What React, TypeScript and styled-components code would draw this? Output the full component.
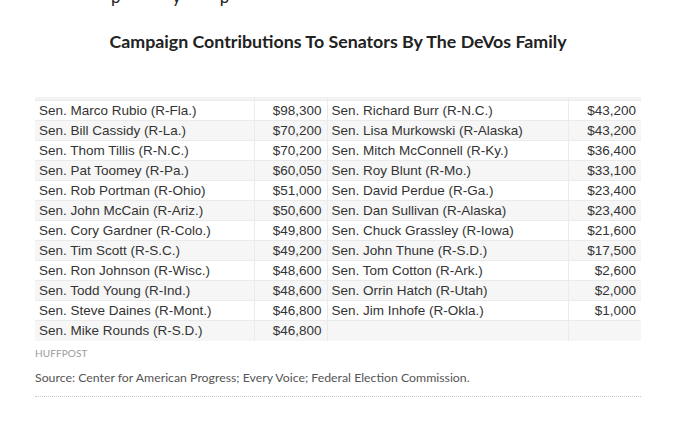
import React from "react";
import styled, { createGlobalStyle } from "styled-components";

const Global = createGlobalStyle`
  html, body { margin: 0; padding: 0; background: #fff; }
  body { width: 680px; height: 425px; overflow: hidden; }
`;

const Page = styled.div`
  display: flex;
  flex-direction: column;
  padding: 0 39px 0 35px;
`;

const Fragment = styled.div`
  height: 6px;
  overflow: hidden;
  font-family: "Lato", "Liberation Sans", sans-serif;
  font-size: 17px;
  color: #222;
  padding-left: 76px;
  white-space: pre;
  & > span { display: block; margin-top: -13px; line-height: 20px; }
`;

const Title = styled.h2`
  margin: 25px 0 0;
  text-align: center;
  font-family: "Lato", "Liberation Sans", sans-serif;
  font-weight: 700;
  font-size: 17.8px;
  line-height: 20px;
  color: #222;
`;

const Table = styled.table`
  margin-top: 46px;
  width: 606px;
  border-collapse: collapse;
  table-layout: fixed;
  font-family: "Liberation Sans", Arial, sans-serif;
  font-size: 13.5px;
  color: #333;
`;

const HeadCell = styled.th`
  height: 3px;
  padding: 0;
  background: #f3f3f3;
  border-left: 1px solid #ececec;
  &:first-child { border-left: none; }
`;

const Row = styled.tr<{ $shade: boolean }>`
  background: ${(p) => (p.$shade ? "#f6f6f6" : "#fff")};
`;

const Cell = styled.td<{ $amount?: boolean }>`
  height: 20px;
  padding: 0 ${(p) => (p.$amount ? "5px" : "4px")} 0 4px;
  line-height: 19px;
  border-top: 1px solid #ebebeb;
  border-left: 1px solid #ebebeb;
  text-align: ${(p) => (p.$amount ? "right" : "left")};
  white-space: nowrap;
  box-sizing: border-box;
  &:first-child { border-left: none; }
`;

const Credit = styled.div`
  margin-top: 6px;
  font-family: "Lato", "Liberation Sans", sans-serif;
  font-size: 10px;
  color: #9a9a9a;
  letter-spacing: 0.1px;
`;

const Source = styled.div`
  margin-top: 11px;
  font-family: "Lato", "Liberation Sans", sans-serif;
  font-size: 12.3px;
  color: #555;
`;

const Rule = styled.div`
  margin-top: 11px;
  width: 606px;
  border-bottom: 1px dotted #c8c8c8;
`;

const left: [string, string][] = [
  ["Sen. Marco Rubio (R-Fla.)", "$98,300"],
  ["Sen. Bill Cassidy (R-La.)", "$70,200"],
  ["Sen. Thom Tillis (R-N.C.)", "$70,200"],
  ["Sen. Pat Toomey (R-Pa.)", "$60,050"],
  ["Sen. Rob Portman (R-Ohio)", "$51,000"],
  ["Sen. John McCain (R-Ariz.)", "$50,600"],
  ["Sen. Cory Gardner (R-Colo.)", "$49,800"],
  ["Sen. Tim Scott (R-S.C.)", "$49,200"],
  ["Sen. Ron Johnson (R-Wisc.)", "$48,600"],
  ["Sen. Todd Young (R-Ind.)", "$48,600"],
  ["Sen. Steve Daines (R-Mont.)", "$46,800"],
  ["Sen. Mike Rounds (R-S.D.)", "$46,800"],
];

const right: [string, string][] = [
  ["Sen. Richard Burr (R-N.C.)", "$43,200"],
  ["Sen. Lisa Murkowski (R-Alaska)", "$43,200"],
  ["Sen. Mitch McConnell (R-Ky.)", "$36,400"],
  ["Sen. Roy Blunt (R-Mo.)", "$33,100"],
  ["Sen. David Perdue (R-Ga.)", "$23,400"],
  ["Sen. Dan Sullivan (R-Alaska)", "$23,400"],
  ["Sen. Chuck Grassley (R-Iowa)", "$21,600"],
  ["Sen. John Thune (R-S.D.)", "$17,500"],
  ["Sen. Tom Cotton (R-Ark.)", "$2,600"],
  ["Sen. Orrin Hatch (R-Utah)", "$2,000"],
  ["Sen. Jim Inhofe (R-Okla.)", "$1,000"],
  ["", ""],
];

export default function App() {
  return (
    <>
      <Global />
      <Page>
        <Fragment>
          <span>{"p            y         p"}</span>
        </Fragment>
        <Title>Campaign Contributions To Senators By The DeVos Family</Title>
        <Table>
          <colgroup>
            <col style={{ width: 219 }} />
            <col style={{ width: 73 }} />
            <col style={{ width: 241 }} />
            <col style={{ width: 73 }} />
          </colgroup>
          <thead>
            <tr>
              <HeadCell />
              <HeadCell />
              <HeadCell />
              <HeadCell />
            </tr>
          </thead>
          <tbody>
            {left.map((l, i) => (
              <Row key={i} $shade={i % 2 === 1}>
                <Cell>{l[0]}</Cell>
                <Cell $amount>{l[1]}</Cell>
                <Cell>{right[i][0]}</Cell>
                <Cell $amount>{right[i][1]}</Cell>
              </Row>
            ))}
          </tbody>
        </Table>
        <Credit>HUFFPOST</Credit>
        <Source>Source: Center for American Progress; Every Voice; Federal Election Commission.</Source>
        <Rule />
      </Page>
    </>
  );
}
